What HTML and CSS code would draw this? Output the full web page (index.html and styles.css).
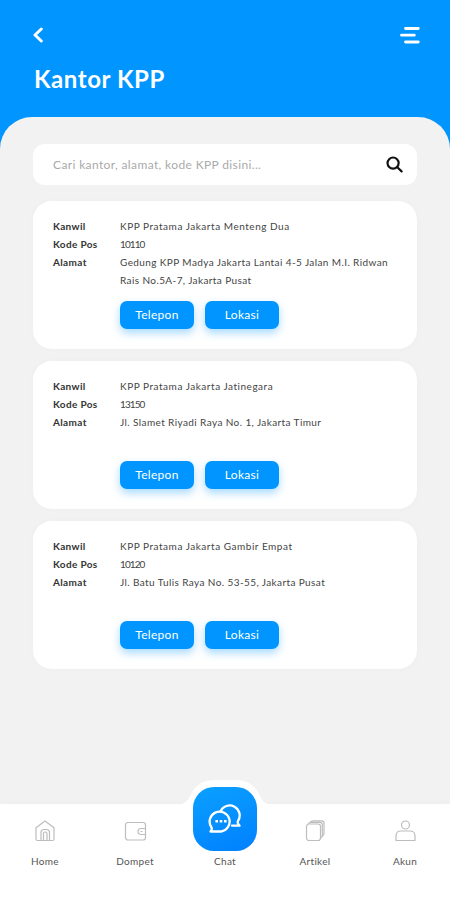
FILE: index.html
```html
<!DOCTYPE html>
<html lang="id">
<head>
  <meta charset="UTF-8">
  <meta name="viewport" content="width=device-width, initial-scale=1.0">
  <title>Kantor KPP</title>
  <link rel="stylesheet" href="styles.css">
</head>
<body>

  <header class="header">
    <div class="header-bar">
      <svg class="back" width="10" height="16" viewBox="0 0 10 16"><path d="M8.3 2 2 8l6.3 6"/></svg>
      <svg class="menu" width="20" height="18" viewBox="0 0 20 18"><path d="M5.500 1.500h12.800M1.500 8.200h12.800M5.500 15h12.800"/></svg>
    </div>
    <h1>Kantor KPP</h1>
  </header>

  <main class="content">
    <form class="search">
      <input type="text" placeholder="Cari kantor, alamat, kode KPP disini...">
      <svg width="17" height="17" viewBox="0 0 18 18"><circle cx="7.500" cy="7.500" r="5.900"/><path d="m12 12 4.500 4.300"/></svg>
    </form>

    <section class="card">
      <dl>
        <dt>Kanwil</dt><dd>KPP Pratama Jakarta Menteng Dua</dd>
        <dt>Kode Pos</dt><dd class="code">10110</dd>
        <dt>Alamat</dt><dd class="address">Gedung KPP Madya Jakarta Lantai 4-5 Jalan M.I. Ridwan<br>Rais No.5A-7, Jakarta Pusat</dd>
      </dl>
      <div class="actions">
        <button type="button">Telepon</button>
        <button type="button">Lokasi</button>
      </div>
    </section>

    <section class="card">
      <dl>
        <dt>Kanwil</dt><dd>KPP Pratama Jakarta Jatinegara</dd>
        <dt>Kode Pos</dt><dd class="code">13150</dd>
        <dt>Alamat</dt><dd class="address">Jl. Slamet Riyadi Raya No. 1, Jakarta Timur</dd>
      </dl>
      <div class="actions">
        <button type="button">Telepon</button>
        <button type="button">Lokasi</button>
      </div>
    </section>

    <section class="card">
      <dl>
        <dt>Kanwil</dt><dd>KPP Pratama Jakarta Gambir Empat</dd>
        <dt>Kode Pos</dt><dd class="code">10120</dd>
        <dt>Alamat</dt><dd class="address">Jl. Batu Tulis Raya No. 53-55, Jakarta Pusat</dd>
      </dl>
      <div class="actions">
        <button type="button">Telepon</button>
        <button type="button">Lokasi</button>
      </div>
    </section>
  </main>

  <nav class="tabbar">
    <svg class="bump" width="100" height="26" viewBox="0 0 100 26"><path d="M0 26C12 25 13 21 16 15 21 5 29 1 40 1h20c11 0 19 4 24 14 3 6 4 10 16 11z"/></svg>
    <a class="tab">
      <svg width="24" height="24" viewBox="0 0 24 24"><path d="M3 8.800 12 2l9 6.800V20q0 1.500-1.500 1.500h-15Q3 21.500 3 20z"/><path d="M8 21.500V13.500q0-3 3-3h2.500q3 0 3 3v8M10.500 21.500v-7q0-1.500 1.500-1.500h.5q1.500 0 1.500 1.500v7"/></svg>
      <span>Home</span>
    </a>
    <a class="tab">
      <svg width="24" height="24" viewBox="0 0 24 24"><rect x="2.500" y="3.500" width="20" height="17.500" rx="2.500"/><path d="M22.500 9.500h-4.500a3 3 0 0 0 0 6h4.500M18 12.500h1"/></svg>
      <span>Dompet</span>
    </a>
    <a class="tab">
      <span class="chat">
        <svg width="34" height="34" viewBox="0 0 34 34">
          <path d="M12.500 7.500a10 10 0 1 1 17.500 9.500c-.7 1.500-.3 3 1.500 4.700H24"/>
          <path d="M2.500 27.500c1.500-1.500 1.700-2.700.9-4.200A10 10 0 1 1 13 27.500z"/>
          <path class="dots" d="M7.400 17.300h2.600M11.700 17.300h2.600M16 17.300h2.600"/>
        </svg>
      </span>
      <span>Chat</span>
    </a>
    <a class="tab">
      <svg width="24" height="24" viewBox="0 0 24 24"><rect x="3.500" y="5" width="14" height="16.500" rx="2.500"/><path d="M5.500 4.500Q6 3.300 8 3.300h9q2.300 0 2.300 2.300V17l-1.800 2.500M7.500 3Q8 1.800 10 1.800h8.500q2.500 0 2.500 2.500V15l-1.700 2.500"/></svg>
      <span>Artikel</span>
    </a>
    <a class="tab">
      <svg width="24" height="24" viewBox="0 0 24 24"><circle cx="12.500" cy="6" r="4"/><path d="M3 21.500V17q0-5 5-5h9q5 0 5 5v4.500z"/></svg>
      <span>Akun</span>
    </a>
  </nav>

</body>
</html>
```

FILE: styles.css
```css
* {
  box-sizing: border-box;
}

body {
  margin: 0;
  height: 900px;
  display: flex;
  flex-direction: column;
  overflow: hidden;
  background-color: #0095ff;
  font-family: Lato, "Noto Sans", sans-serif;
  color: #444;
}

svg {
  display: block;
  fill: none;
  stroke-linecap: round;
  stroke-linejoin: round;
}

.header {
  height: 117px;
  padding: 27px 30px 0 33px;
}

.header-bar {
  display: flex;
  justify-content: space-between;
  height: 18px;
}

.back {
  stroke: #fff;
  stroke-width: 3;
}

.menu {
  stroke: #fff;
  stroke-width: 2.8;
}

h1 {
  margin: 19px 0 0 1px;
  font-size: 24px;
  line-height: 30px;
  font-weight: 700;
  letter-spacing: 0.6px;
  color: #fff;
}

.content {
  flex: 1;
  display: flex;
  flex-direction: column;
  gap: 12px;
  padding: 27px 33px 0;
  background-color: #f2f2f2;
  border-radius: 32px 32px 0 0;
}

.search {
  display: flex;
  align-items: center;
  height: 41px;
  margin-bottom: 4px;
  padding: 0 14px 0 20px;
  background-color: #fff;
  border-radius: 12px;
}

.search input {
  flex: 1;
  padding: 0;
  border: 0;
  outline: 0;
  background: none;
  font: 12px Lato, sans-serif;
  letter-spacing: 0.37px;
}

.search input::placeholder {
  color: #aaa;
}

.search svg {
  stroke: #111;
  stroke-width: 2.3;
}

.card {
  height: 148px;
  padding: 16px 20px 0;
  background-color: #fff;
  border-radius: 19px;
  box-shadow: 0 0 10px rgba(0, 0, 0, 0.02);
}

dl {
  display: grid;
  grid-template-columns: 67px 1fr;
  grid-template-rows: 18px 18px 36px;
  margin: 0;
  font-size: 10px;
  line-height: 18px;
  white-space: nowrap;
}

dt {
  color: #333;
  font-weight: 700;
  letter-spacing: 0.35px;
}

dd {
  margin: 0;
  letter-spacing: 0.53px;
}

.code {
  letter-spacing: -0.9px;
}

.address {
  letter-spacing: 0.4px;
}

.actions {
  display: flex;
  gap: 11px;
  margin: 12px 0 0 67px;
}

button {
  width: 74px;
  height: 28px;
  padding: 0 0 2px;
  border: none;
  border-radius: 7px;
  background-color: #0095ff;
  box-shadow: 0 4px 9px rgba(0, 149, 255, 0.35);
  color: #fff;
  font: 12px Lato, sans-serif;
  letter-spacing: 0.3px;
}

.tabbar {
  position: relative;
  display: flex;
  height: 96px;
  background-color: #fff;
  box-shadow: 0 -2px 6px rgba(0, 0, 0, 0.02);
}

/* raised edge around the chat button */
.bump {
  position: absolute;
  left: 175px;
  top: -25px;
  fill: #fff;
}

.tab {
  position: relative;
  flex: 1;
  display: flex;
  flex-direction: column;
  align-items: center;
  justify-content: flex-end;
  gap: 11px;
  padding-bottom: 31px;
  font-size: 10px;
  line-height: 15px;
  letter-spacing: 0.3px;
  color: #555;
}

.tab > svg {
  stroke: #bdbdbd;
  stroke-width: 1.2;
}

.chat {
  flex-shrink: 0;
  display: flex;
  align-items: center;
  justify-content: center;
  width: 64px;
  height: 64px;
  margin-bottom: -8px;
  padding-top: 3px;
  border-radius: 21px;
  background: linear-gradient(160deg, #0ba0ff, #0080ff);
}

.chat svg {
  stroke: #fff;
  stroke-width: 2.3;
}

.chat .dots {
  stroke-linecap: butt;
  stroke-width: 2.5;
}
```
